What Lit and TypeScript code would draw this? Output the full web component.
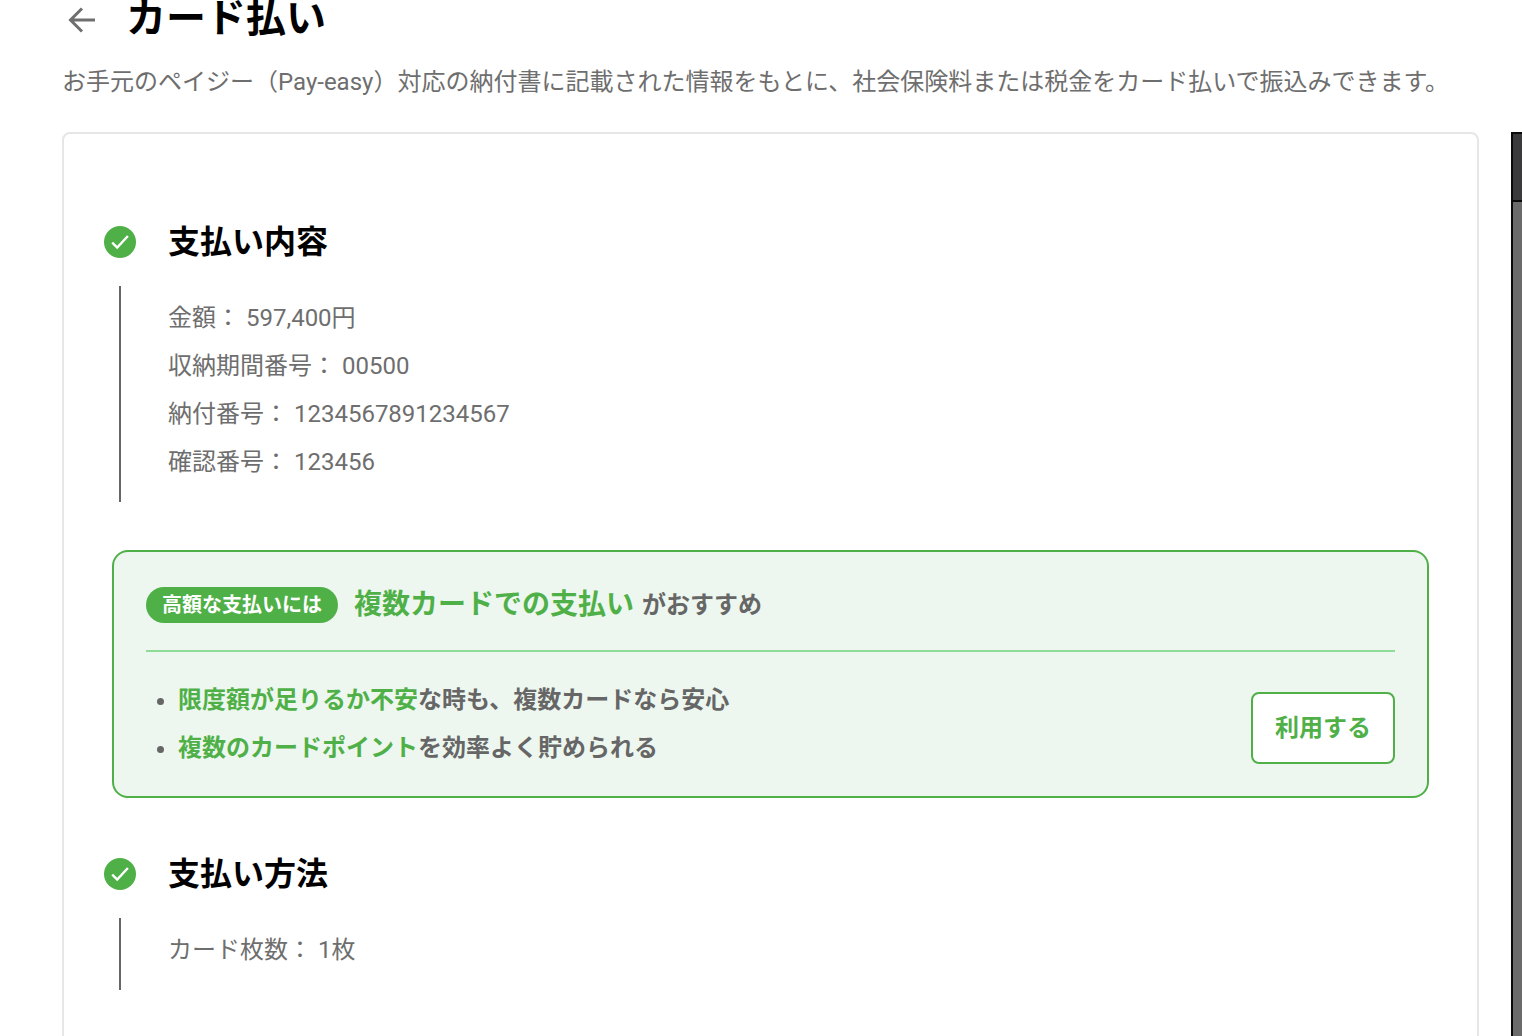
import { LitElement, html, css } from "lit";
import { customElement } from "lit/decorators.js";

const check = html`<svg class="check" viewBox="0 0 32 32" width="32" height="32">
  <circle cx="16" cy="16" r="16" fill="#50b048"></circle>
  <path d="M8.2 16.6l5 5L23.9 10" fill="none" stroke="#fff" stroke-width="2.4"></path>
</svg>`;

@customElement("app-root")
export class AppRoot extends LitElement {
  static styles = css`
    :host {
      display: block;
      position: relative;
      height: 1036px;
      overflow: hidden;
      background: #fff;
      color: #6e6e6e;
      font-family: Roboto, "Noto Sans CJK JP", sans-serif;
      font-size: 24px;
      line-height: 48px;
    }
    .page {
      display: flex;
      flex-direction: column;
      padding: 0 43px 0 62px;
    }
    .head {
      display: flex;
      align-items: center;
      gap: 30px;
      height: 38px;
      padding-left: 6px;
    }
    .back {
      flex: none;
      margin-top: 2px;
    }
    h1 {
      margin: 0;
      color: #000;
      font-size: 40px;
      font-weight: 700;
      line-height: 38px;
      white-space: nowrap;
    }
    .lead {
      margin: 20px 0 26px;
      white-space: nowrap;
    }
    .card {
      box-sizing: border-box;
      height: 911px;
      padding: 72px 48px 0 40px;
      border: 2px solid #e6e6e6;
      border-radius: 8px;
    }
    .step {
      display: flex;
      align-items: center;
      gap: 32px;
      height: 72px;
    }
    .check {
      flex: none;
    }
    h2 {
      margin: 0;
      color: #000;
      font-size: 32px;
      font-weight: 700;
      line-height: 48px;
    }
    .rows {
      margin: 8px 0 0 15px;
      padding: 8px 0 16px 47px;
      border-left: 2px solid #666;
    }
    .rows div {
      height: 48px;
    }
    .promo {
      box-sizing: border-box;
      height: 248px;
      margin: 48px 0 40px 8px;
      padding: 16px 32px 0;
      border: 2px solid #50b048;
      border-radius: 16px;
      background: #edf7ef;
    }
    .promo-head {
      display: flex;
      align-items: center;
      gap: 16px;
      height: 74px;
      padding-bottom: 8px;
      border-bottom: 2px solid #8fdc96;
    }
    .pill {
      padding: 0 16px;
      border-radius: 18px;
      background: #50b048;
      color: #fff;
      font-size: 20px;
      font-weight: 700;
      line-height: 36px;
    }
    .promo-title {
      color: #50b048;
      font-size: 28px;
      font-weight: 700;
    }
    .promo-sub {
      margin-left: -8px;
      color: #666;
      font-weight: 700;
    }
    .promo-body {
      display: flex;
      align-items: center;
      justify-content: space-between;
      padding-top: 24px;
    }
    ul {
      margin: 0;
      padding: 0 0 0 32px;
      color: #666;
      font-weight: 700;
    }
    li {
      height: 48px;
    }
    em {
      color: #50b048;
      font-style: normal;
    }
    button {
      box-sizing: border-box;
      width: 144px;
      height: 72px;
      margin-top: 8px;
      padding: 0;
      border: 2px solid #50b048;
      border-radius: 8px;
      background: #fff;
      color: #50b048;
      font: 700 24px/1 Roboto, "Noto Sans CJK JP", sans-serif;
    }
    .scrollbar {
      position: absolute;
      top: 132px;
      bottom: 0;
      left: 1511px;
      width: 11px;
      box-sizing: border-box;
      border-left: 2px solid #0a0a0a;
      background: #6b6b6b;
    }
    .scrollbar div {
      height: 70px;
      box-sizing: border-box;
      border-top: 2px solid #0a0a0a;
      border-bottom: 2px solid #0a0a0a;
      background: #3a3a3c;
    }
  `;

  render() {
    return html`
      <div class="page">
        <div class="head">
          <svg class="back" viewBox="0 0 28 28" width="28" height="28">
            <path d="M27 14H3M14 2.5L2.5 14 14 25.5" fill="none" stroke="#6f6f6f" stroke-width="3"></path>
          </svg>
          <h1>カード払い</h1>
        </div>
        <p class="lead">お手元のペイジー（Pay-easy）対応の納付書に記載された情報をもとに、社会保険料または税金をカード払いで振込みできます。</p>
        <section class="card">
          <div class="step">${check}<h2>支払い内容</h2></div>
          <div class="rows">
            <div>金額： 597,400円</div>
            <div>収納期間番号： 00500</div>
            <div>納付番号： 1234567891234567</div>
            <div>確認番号： 123456</div>
          </div>
          <div class="promo">
            <div class="promo-head">
              <span class="pill">高額な支払いには</span>
              <span class="promo-title">複数カードでの支払い</span>
              <span class="promo-sub">がおすすめ</span>
            </div>
            <div class="promo-body">
              <ul>
                <li><em>限度額が足りるか不安</em>な時も、複数カードなら安心</li>
                <li><em>複数のカードポイント</em>を効率よく貯められる</li>
              </ul>
              <button>利用する</button>
            </div>
          </div>
          <div class="step">${check}<h2>支払い方法</h2></div>
          <div class="rows">
            <div>カード枚数： 1枚</div>
          </div>
        </section>
      </div>
      <div class="scrollbar"><div></div></div>
    `;
  }
}
